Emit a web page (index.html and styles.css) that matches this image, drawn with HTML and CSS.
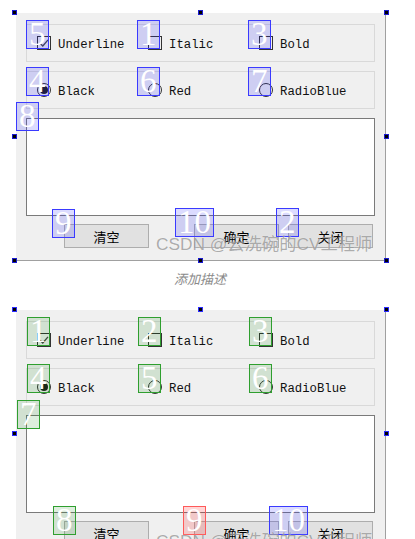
FILE: index.html
```html
<!DOCTYPE html>
<html lang="zh-CN">
<head>
<meta charset="utf-8">
<title>Qt Designer tab order</title>
<link rel="stylesheet" href="styles.css">
</head>
<body>
<div class="stage first">
  <div class="group">
    <div class="opt"><span class="chk"><svg viewBox="0 0 14 14" width="14" height="14"><path d="M3 7.2 L5.8 10 L11 3.8" fill="none" stroke="#444" stroke-width="1.3"/></svg></span><span class="lbl">Underline</span></div>
    <div class="opt"><span class="chk"></span><span class="lbl">Italic</span></div>
    <div class="opt"><span class="chk"></span><span class="lbl">Bold</span></div>
  </div>
  <div class="group">
    <div class="opt"><span class="radio on"></span><span class="lbl">Black</span></div>
    <div class="opt"><span class="radio"></span><span class="lbl">Red</span></div>
    <div class="opt"><span class="radio"></span><span class="lbl">RadioBlue</span></div>
  </div>
  <div class="edit"></div>
  <div class="buttons">
    <span class="btn">清空</span>
    <span class="spacer"></span>
    <span class="btn">确定</span>
    <span class="btn">关闭</span>
  </div>

  <span class="h tl"></span><span class="h tm"></span><span class="h tr"></span>
  <span class="h ml"></span><span class="h mr"></span>
  <span class="h bl"></span><span class="h bm"></span><span class="h br"></span>

  <span class="tab blue t-r1c1">5</span>
  <span class="tab blue t-r1c2">1</span>
  <span class="tab blue t-r1c3">3</span>
  <span class="tab blue t-r2c1">4</span>
  <span class="tab blue t-r2c2">6</span>
  <span class="tab blue t-r2c3">7</span>
  <span class="tab blue t-edit">8</span>
  <span class="tab blue t-b1">9</span>
  <span class="tab blue t-b2">10</span>
  <span class="tab blue t-b3">2</span>

  <span class="mark">CSDN @云洗碗的CV工程师</span>
</div>

<div class="caption">添加描述</div>

<div class="stage second">
  <div class="group">
    <div class="opt"><span class="chk"><svg viewBox="0 0 14 14" width="14" height="14"><path d="M3 7.2 L5.8 10 L11 3.8" fill="none" stroke="#444" stroke-width="1.3"/></svg></span><span class="lbl">Underline</span></div>
    <div class="opt"><span class="chk"></span><span class="lbl">Italic</span></div>
    <div class="opt"><span class="chk"></span><span class="lbl">Bold</span></div>
  </div>
  <div class="group">
    <div class="opt"><span class="radio on"></span><span class="lbl">Black</span></div>
    <div class="opt"><span class="radio"></span><span class="lbl">Red</span></div>
    <div class="opt"><span class="radio"></span><span class="lbl">RadioBlue</span></div>
  </div>
  <div class="edit"></div>
  <div class="buttons">
    <span class="btn">清空</span>
    <span class="spacer"></span>
    <span class="btn">确定</span>
    <span class="btn">关闭</span>
  </div>

  <span class="h tl"></span><span class="h tm"></span><span class="h tr"></span>
  <span class="h ml"></span><span class="h mr"></span>
  <span class="h bl"></span><span class="h bm"></span><span class="h br"></span>

  <span class="tab green s-r1c1">1</span>
  <span class="tab green s-r1c2">2</span>
  <span class="tab green s-r1c3">3</span>
  <span class="tab green s-r2c1">4</span>
  <span class="tab green s-r2c2">5</span>
  <span class="tab green s-r2c3">6</span>
  <span class="tab green s-edit">7</span>
  <span class="tab green s-b1">8</span>
  <span class="tab red s-b2">9</span>
  <span class="tab blue s-b3">10</span>

  <span class="mark">CSDN @云洗碗的CV工程师</span>
</div>
</body>
</html>
```

FILE: styles.css
```css
html, body {
  margin: 0;
  padding: 0;
  background: #ffffff;
  overflow: hidden;
  height: 539px;
}

body {
  padding-top: 13px;
  box-sizing: border-box;
  font-family: "Liberation Sans", "Noto Sans CJK SC", sans-serif;
}

.stage {
  position: relative;
  box-sizing: border-box;
  margin-left: 16px;
  width: 370px;
  height: 248px;
  padding: 11px 10px 0 10px;
  background: #f0f0f0;
  border-right: 1px solid #a0a0a0;
  border-bottom: 1px solid #a0a0a0;
  display: flex;
  flex-direction: column;
}

.second {
  margin-top: 23px;
}

.group {
  box-sizing: border-box;
  height: 38px;
  border: 1px solid #d9d9d9;
  padding-left: 10px;
  display: grid;
  grid-template-columns: 111px 111px 111px;
  align-items: center;
  margin-bottom: 9px;
}

.opt {
  display: flex;
  align-items: center;
  gap: 7px;
}

.chk {
  box-sizing: border-box;
  width: 14px;
  height: 14px;
  border: 1px solid #333333;
  display: block;
  position: relative;
}

.chk svg {
  position: absolute;
  left: -1px;
  top: -1px;
}

.radio {
  box-sizing: border-box;
  width: 14px;
  height: 14px;
  border: 1px solid #333333;
  border-radius: 50%;
  display: flex;
  align-items: center;
  justify-content: center;
}

.radio.on::after {
  content: "";
  width: 8px;
  height: 8px;
  border-radius: 50%;
  background: #1e1e1e;
}

.lbl {
  font-family: "Liberation Mono", "DejaVu Sans Mono", monospace;
  font-size: 12.3px;
  color: #111111;
  line-height: 16px;
  padding-top: 4px;
}

.edit {
  box-sizing: border-box;
  height: 98px;
  background: #ffffff;
  border: 1px solid #7a7a7a;
}

.buttons {
  margin-top: 8px;
  height: 24px;
  display: flex;
  padding: 0 2px 0 38px;
  gap: 9px;
}

.spacer {
  flex: 1;
}

.btn {
  box-sizing: border-box;
  width: 85px;
  height: 24px;
  background: #e1e1e1;
  border: 1px solid #adadad;
  display: flex;
  align-items: center;
  justify-content: center;
  font-family: "Noto Sans CJK SC", sans-serif;
  font-size: 13px;
  color: #000000;
}

/* selection handles */
.h {
  position: absolute;
  box-sizing: border-box;
  width: 5px;
  height: 5px;
  background: #000000;
  border: 1px solid #1a1ad0;
}

.second .h {
  border-color: #2b2bff;
}

.tl { left: -4px; top: -3px; }
.tm { left: 182px; top: -3px; }
.tr { left: 368px; top: -3px; }
.ml { left: -4px; top: 121px; }
.mr { left: 368px; top: 121px; }
.bl { left: -4px; top: 245px; }
.bm { left: 182px; top: 245px; }
.br { left: 368px; top: 245px; }

/* tab order badges */
.tab {
  position: absolute;
  box-sizing: border-box;
  min-width: 22px;
  height: 29px;
  padding: 0 2px;
  font-family: "Liberation Serif", serif;
  font-size: 33px;
  line-height: 27px;
  text-align: center;
  color: #ffffff;
}

.blue {
  background: rgba(40, 40, 255, 0.17);
  border: 1px solid #3a3aff;
}

.green {
  background: rgba(0, 120, 0, 0.13);
  border: 1px solid #2f9f2f;
}

.red {
  background: rgba(255, 0, 0, 0.16);
  border: 1px solid #ff5a5a;
}

.t-r1c1 { left: 10px; top: 7px; }
.t-r1c2 { left: 121px; top: 7px; }
.t-r1c3 { left: 232px; top: 7px; }
.t-r2c1 { left: 10px; top: 54px; }
.t-r2c2 { left: 121px; top: 54px; }
.t-r2c3 { left: 232px; top: 54px; }
.t-edit { left: 0; top: 89px; }
.t-b1 { left: 36px; top: 196px; }
.t-b2 { left: 159px; top: 195px; }
.t-b3 { left: 260px; top: 195px; }

.s-r1c1 { left: 11px; top: 7px; }
.s-r1c2 { left: 122px; top: 7px; }
.s-r1c3 { left: 233px; top: 7px; }
.s-r2c1 { left: 11px; top: 54px; }
.s-r2c2 { left: 122px; top: 54px; }
.s-r2c3 { left: 233px; top: 54px; }
.s-edit { left: 1px; top: 90px; }
.s-b1 { left: 37px; top: 196px; }
.s-b2 { left: 167px; top: 196px; }
.s-b3 { left: 253px; top: 196px; }

/* watermark */
.mark {
  position: absolute;
  left: 140px;
  top: 222px;
  font-family: "Liberation Sans", "Noto Sans CJK SC", sans-serif;
  font-size: 17.3px;
  line-height: 18px;
  color: rgba(105, 105, 105, 0.55);
  white-space: nowrap;
  text-shadow: 0 0 1px rgba(255, 255, 255, 0.7);
}

.caption {
  width: 400px;
  margin-top: 10px;
  height: 16px;
  line-height: 16px;
  text-align: center;
  font-family: "Noto Sans CJK SC", sans-serif;
  font-size: 13px;
  font-style: italic;
  color: #8a8a8a;
}
```
